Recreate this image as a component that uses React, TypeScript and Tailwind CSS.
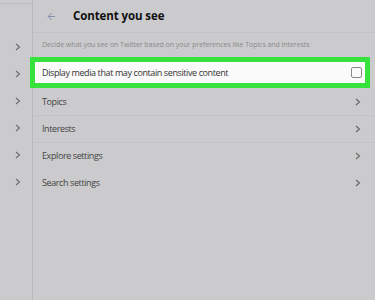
import { ArrowLeft } from "lucide-react";

const sideRows = [0, 1, 2, 3, 4, 5];
const items = ["Topics", "Interests", "Explore settings", "Search settings"];

function Chevron({ className }: { className?: string }) {
  return (
    <svg width="6" height="8" viewBox="0 0 6 8" className={className}>
      <polyline points="1,1 4.5,4 1,7" fill="none" stroke="currentColor" strokeWidth="1.1" />
    </svg>
  );
}

export default function App() {
  return (
    <div className="flex h-[300px] w-[375px] overflow-hidden bg-[#cbcbcd] font-['Open_Sans',sans-serif] text-[#333]">
      <div className="flex w-[33px] shrink-0 flex-col border-r border-[#b9b9bb] pt-[3px]">
        <div className="h-[30px] border-t border-[#bdbdbf]" />
        {sideRows.map((i) => (
          <div key={i} className="flex h-[27px] items-center justify-center pl-[4px] text-[#6b6b6d]">
            <Chevron />
          </div>
        ))}
      </div>
      <div className="flex flex-1 flex-col">
        <div className="flex h-[33px] items-center border-b border-[#c3c3c5]">
          <ArrowLeft className="ml-[13px] h-[11px] w-[11px] text-[#7d8aa6]" strokeWidth={2} />
          <h1 className="ml-[16px] text-[11.5px] font-bold tracking-[-0.1px] text-[#111]">Content you see</h1>
        </div>
        <div className="flex h-[24px] items-center pl-[9px] text-[7px] tracking-[-0.05px] text-[#8a8a8c]">
          Decide what you see on Twitter based on your preferences like Topics and interests
        </div>
        <div className="ml-[-3px] mr-[5px] flex h-[31px] items-center border-[5px] border-[#36e23c] bg-[#fafafa] pl-[7px] pr-[3px]">
          <span className="flex-1 text-[9px] tracking-[-0.4px] text-[#333]">Display media that may contain sensitive content</span>
          <span className="h-[11px] w-[11px] rounded-[2px] border border-[#8a8a8c]" />
        </div>
        {items.map((label, i) => (
          <div
            key={label}
            className={`flex h-[27px] items-center pl-[9px] pr-[14px] ${i > 0 && i < 3 ? "border-t border-[#c4c4c6]" : ""}`}
          >
            <span className="flex-1 text-[9px] tracking-[-0.4px] text-[#444]">{label}</span>
            <Chevron className="text-[#666]" />
          </div>
        ))}
      </div>
    </div>
  );
}
